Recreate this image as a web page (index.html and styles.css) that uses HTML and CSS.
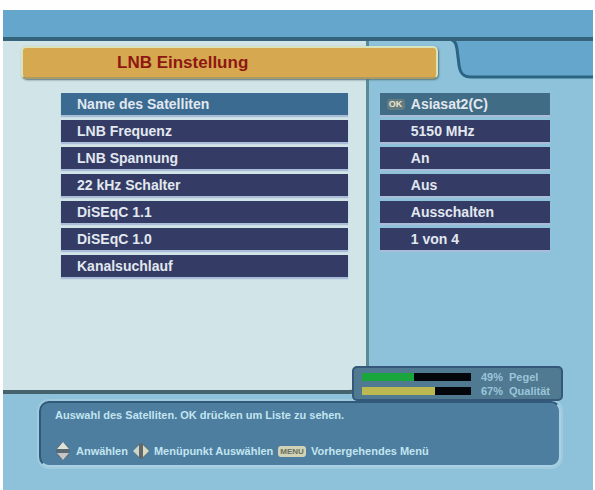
FILE: index.html
```html
<!DOCTYPE html>
<html lang="de">
<head>
<meta charset="utf-8">
<title>LNB Einstellung</title>
<link rel="stylesheet" href="styles.css">
</head>
<body>
<div class="screen">
  <svg class="notch" viewBox="0 0 146 72" aria-hidden="true">
    <path d="M0 0H146V67H24C16 67 13 63 12 55L10 39C9 32 7 29 0 29Z" fill="#65a6cd"/>
    <path d="M0 29C7 29 9 32 10 39L12 55C13 63 16 67 24 67H146" fill="none" stroke="#2c6484" stroke-width="3"/>
  </svg>
  <main class="settings">
    <h1 class="title">LNB Einstellung</h1>
    <nav class="panel menu">
      <button class="row active" type="button">Name des Satelliten</button>
      <button class="row" type="button">LNB Frequenz</button>
      <button class="row" type="button">LNB Spannung</button>
      <button class="row" type="button">22 kHz Schalter</button>
      <button class="row" type="button">DiSEqC 1.1</button>
      <button class="row" type="button">DiSEqC 1.0</button>
      <button class="row" type="button">Kanalsuchlauf</button>
    </nav>
    <div class="panel values">
      <div class="row active"><span class="key ok">OK</span>Asiasat2(C)</div>
      <div class="row">5150 MHz</div>
      <div class="row">An</div>
      <div class="row">Aus</div>
      <div class="row">Ausschalten</div>
      <div class="row">1 von 4</div>
    </div>
    <section class="signal">
      <div class="bar"><div class="level" style="width:48%"></div></div>
      <span>49%</span><span>Pegel</span>
      <div class="bar"><div class="level quality" style="width:67%"></div></div>
      <span>67%</span><span>Qualität</span>
    </section>
  </main>
  <footer class="help">
    <p>Auswahl des Satelliten. OK drücken um Liste zu sehen.</p>
    <div class="hints">
      <svg class="icon" viewBox="0 0 16 20" aria-hidden="true">
        <path d="M1 10L3 5L8 1L13 5L15 10L13 15L8 19L3 15Z" fill="#596873"/>
        <path d="M8 1L14 8H2Z" fill="#dce2d8"/>
        <path d="M2 12H14L8 19Z" fill="#c8c5c6"/>
      </svg>
      <span>Anwählen</span>
      <svg class="icon" viewBox="0 0 16 20" aria-hidden="true">
        <path d="M0 10L5 4L8 2L11 4L16 10L11 16L8 18L5 16Z" fill="#60686a"/>
        <path d="M6 4V16L0 10Z" fill="#c9d5cd"/>
        <path d="M10 4V16L16 10Z" fill="#d9dac0"/>
      </svg>
      <span>Menüpunkt Auswählen</span>
      <span class="key">MENU</span>
      <span>Vorhergehendes Menü</span>
    </div>
  </footer>
</div>
</body>
</html>
```
FILE: styles.css
```css
* { box-sizing: border-box; }

body {
  margin: 0;
  padding: 10px 2px 0 3px;
  background: #fdfefd;
  font-family: "Liberation Sans", Arial, sans-serif;
  font-weight: bold;
}

.screen {
  position: relative;
  min-height: calc(100vh - 10px);
  padding-top: 27px;
  background: linear-gradient(#65a6cd 30px, #8dc2da 30px);
}

.notch {
  position: absolute;
  top: 0;
  right: 0;
  width: 146px;
  height: 72px;
}

.settings {
  position: relative;
  display: grid;
  grid-template-columns: 62fr 38fr;
  grid-template-rows: 45px auto;
  border-top: 4px solid #34637b;
}

.title {
  position: relative;
  grid-area: 1 / 1 / 2 / 3;
  height: 33px;
  margin: 5px 155px 0 18px;
  padding-left: 94px;
  border: 2px solid #d9e3bd;
  border-bottom-color: #a99a68;
  border-radius: 5px;
  background: #d6a84f;
  box-shadow: 1px 1px 2px #56757b;
  color: #8e1712;
  font-size: 17px;
  line-height: 29px;
}

.panel {
  grid-row: 1 / 3;
  display: flex;
  flex-direction: column;
  gap: 5px;
  padding-top: 52px;
}

.menu {
  grid-column: 1;
  padding: 52px 18px 113px 58px;
  border-right: 3px solid #5d8995;
  border-bottom: 4px solid #44636d;
  border-bottom-right-radius: 20px;
  background: #d1e4e7;
}

.values {
  grid-column: 2;
  padding-right: 43px;
  padding-left: 11px;
}

.row {
  display: block;
  height: 22px;
  padding: 0 0 0 16px;
  border: 0;
  background: #343c65;
  box-shadow: 0 2px 1px #aabdd8;
  color: #e2e8f0;
  font: inherit;
  font-size: 14px;
  line-height: 22px;
  text-align: left;
}

.values .row { padding-left: 31px; }

.row.active { background: #3b6b90; }

.values .row.active {
  display: flex;
  align-items: center;
  gap: 6px;
  padding-left: 7px;
  background: #416c85;
}

.key {
  padding: 0 2px;
  border-radius: 3px;
  background: #d2d2b6;
  color: #69705f;
  font-size: 8px;
  line-height: 11px;
}

.key.ok {
  width: 18px;
  background: #637c81;
  color: #eee2cc;
  font-size: 9px;
}

.signal {
  position: absolute;
  right: 30px;
  bottom: -7px;
  display: grid;
  grid-template-columns: 109px 18px auto;
  align-content: center;
  align-items: center;
  gap: 0 10px;
  width: 211px;
  height: 35px;
  padding: 0 8px;
  border: 2px solid #34577a;
  border-radius: 5px;
  background: #507992;
  color: #9bc5d9;
  font-size: 11px;
  line-height: 14px;
}

.bar {
  height: 8px;
  background: #03070b;
}

.level {
  height: 100%;
  background: #19a73d;
}

.level.quality { background: #bdb952; }

.help {
  margin: 7px 32px 0 36px;
  padding: 4px 14px;
  border: 2px solid #a9d0e5;
  border-top-color: #315a7a;
  border-left-color: #315a7a;
  border-radius: 10px;
  background: #4d7d9f;
  box-shadow: 0 0 0 2px #a0cade;
  color: #c2e5f0;
  font-size: 11px;
  line-height: 16px;
}

.help p { margin: 0 0 18px; }

.hints {
  display: flex;
  align-items: center;
  gap: 5px;
}

.icon {
  width: 16px;
  height: 20px;
}
```
